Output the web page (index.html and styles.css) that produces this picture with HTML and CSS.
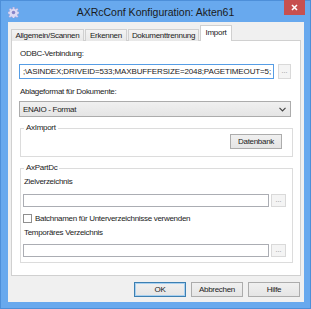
FILE: index.html
```html
<!DOCTYPE html>
<html>
<head>
  <title>AXRcConf Konfiguration</title>
  <link rel="stylesheet" href="styles.css">
</head>
<body>
  <div class="window">
    <div class="titlebar">
      <svg class="app-icon" width="11" height="11" viewBox="0 0 20 20">
        <path d="M8.5 0h3l.5 3 2 .9 2.5-1.8 2.1 2.1-1.8 2.5.9 2 3 .5v3l-3 .5-.9 2 1.8 2.5-2.1 2.1-2.5-1.8-2 .9-.5 3h-3l-.5-3-2-.9-2.5 1.8-2.1-2.1 1.8-2.5-.9-2-3-.5v-3l3-.5.9-2L2.1 4.2 4.2 2.1l2.5 1.8 2-.9z" fill="#dcdaf4" stroke="#a3a1d8" stroke-width="1"/>
        <circle cx="10" cy="10" r="3.2" fill="#8684c8"/>
      </svg>
      <div class="title">AXRcConf Konfiguration: Akten61</div>
      <div class="close">
        <svg width="7" height="7" viewBox="0 0 7 7"><path d="M1 1l5 5M6 1l-5 5" stroke="#fff" stroke-width="1.6"/></svg>
      </div>
    </div>

    <div class="client">
      <div class="tabs">
        <div class="tab" style="width:73px">Allgemein/Scannen</div>
        <div class="tab" style="width:42px">Erkennen</div>
        <div class="tab" style="width:71px">Dokumenttrennung</div>
        <div class="tab active" style="width:32px">Import</div>
      </div>

      <div class="panel">
        <div class="label">ODBC-Verbindung:</div>
        <div class="row row-odbc">
          <div class="input focus"><span>;\ASINDEX;DRIVEID=533;MAXBUFFERSIZE=2048;PAGETIMEOUT=5;</span></div>
          <div class="dots">...</div>
        </div>

        <div class="label label-ablage">Ablageformat für Dokumente:</div>
        <div class="select">
          <span>ENAIO - Format</span>
          <svg width="7" height="5" viewBox="0 0 7 5"><path d="M0.5 0.8l3 3 3-3" fill="none" stroke="#444" stroke-width="1.2"/></svg>
        </div>

        <fieldset class="group group-import">
          <legend>AxImport</legend>
          <div class="btn-row">
            <div class="button">Datenbank</div>
          </div>
        </fieldset>

        <fieldset class="group group-part">
          <legend>AxPartDc</legend>
          <div class="label label-ziel">Zielverzeichnis</div>
          <div class="row row-small">
            <div class="input small"></div>
            <div class="dots small">...</div>
          </div>
          <div class="check-row">
            <div class="checkbox"></div>
            <span>Batchnamen für Unterverzeichnisse verwenden</span>
          </div>
          <div class="label label-temp">Temporäres Verzeichnis</div>
          <div class="row row-small row-temp">
            <div class="input small"></div>
            <div class="dots small">...</div>
          </div>
        </fieldset>
      </div>

      <div class="footer">
        <div class="button default">OK</div>
        <div class="button">Abbrechen</div>
        <div class="button">Hilfe</div>
      </div>
    </div>
  </div>
</body>
</html>
```

FILE: styles.css
```css
* {
  box-sizing: border-box;
}
body {
  margin: 0;
  font-family: "Liberation Sans", Arial, sans-serif;
  font-size: 8px;
  letter-spacing: -0.3px;
  color: #1b1b1b;
}
.window {
  width: 311px;
  height: 309px;
  background: #68a9ee;
  border: 1px solid #4d8fd9;
  display: flex;
  flex-direction: column;
}
.titlebar {
  height: 21px;
  display: flex;
  align-items: flex-start;
}
.app-icon {
  margin: 6px 0 0 7px;
}
.title {
  flex: 1;
  text-align: center;
  font-size: 10.5px;
  letter-spacing: 0;
  line-height: 11px;
  margin-top: 6px;
  padding-left: 8px;
  color: #1a1a1a;
}
.close {
  width: 21px;
  height: 15px;
  margin: -1px 5px 0 0;
  background: #c75050;
  display: flex;
  align-items: center;
  justify-content: center;
}
.client {
  flex: 1;
  margin: 0 6px 6px 7px;
  background: #f0f0f0;
  padding: 0 3px 4px 3px;
  display: flex;
  flex-direction: column;
}

/* Tabs */
.tabs {
  display: flex;
  align-items: flex-end;
  height: 19px;
  margin-bottom: -1px;
  position: relative;
  z-index: 1;
}
.tab {
  height: 12px;
  line-height: 11px;
  text-align: center;
  border: 1px solid #d0d0d0;
  border-bottom: none;
  background: linear-gradient(#f3f3f3, #e8e8e8);
  margin-right: 1px;
  white-space: nowrap;
}
.tab.active {
  height: 16px;
  background: #fff;
  line-height: 13px;
  margin-right: 0;
}

.panel {
  width: 290px;
  height: 236px;
  background: #fff;
  border: 1px solid #d0d0d0;
  padding: 8px 9px 0 7px;
  display: flex;
  flex-direction: column;
}
.label {
  line-height: 10px;
  height: 10px;
  padding-left: 1px;
  white-space: nowrap;
}
.row {
  display: flex;
  align-items: center;
}
.row-odbc {
  margin-top: 5px;
  gap: 4px;
}
.input {
  height: 15px;
  flex: 1;
  background: #fff;
  border: 1px solid #abadb3;
  overflow: hidden;
  display: flex;
  justify-content: flex-end;
  align-items: center;
  white-space: nowrap;
  padding: 0 2px;
}
.input.focus {
  border-color: #569de5;
  width: 255px;
  flex: none;
  letter-spacing: -0.13px;
}
.dots {
  width: 13px;
  height: 15px;
  border: 1px solid #d9d9d9;
  background: #f4f4f4;
  color: #8a8a8a;
  text-align: center;
  line-height: 11px;
  font-size: 7px;
  letter-spacing: 0;
}
.label-ablage {
  margin-top: 8px;
}
.select {
  margin-top: 4px;
  height: 16px;
  width: 272px;
  background: linear-gradient(#f0f0f0, #e5e5e5);
  border: 1px solid #acacac;
  display: flex;
  align-items: center;
  justify-content: space-between;
  padding: 0 4px 0 3px;
}

/* Group boxes */
.group {
  margin: 6px 0 0 1px;
  width: 273px;
  border: 1px solid #dcdcdc;
  padding: 0 2px;
  min-width: 0;
}
.group legend {
  padding: 0 2px;
  margin-left: 1px;
  line-height: 10px;
  height: 10px;
}
.btn-row {
  display: flex;
  justify-content: flex-end;
  margin-top: 1px;
  padding-right: 8px;
  padding-bottom: 7px;
}
.button {
  width: 52px;
  height: 15px;
  border: 1px solid #acacac;
  background: linear-gradient(#f0f0f0, #e5e5e5);
  text-align: center;
  line-height: 13px;
}
.button.default {
  border-color: #3c7fb1;
  box-shadow: inset 0 0 0 1px #a8d0f0;
}
.group-part {
  padding-bottom: 5px;
}
.label-ziel {
  margin-top: 4px;
}
.row-small {
  margin-top: 7px;
  gap: 2px;
}
.input.small {
  height: 13px;
  flex: none;
  width: 246px;
}
.dots.small {
  width: 15px;
  height: 13px;
  line-height: 9px;
}
.check-row {
  margin-top: 6px;
  display: flex;
  align-items: center;
  gap: 3px;
  height: 10px;
  white-space: nowrap;
}
.checkbox {
  width: 9px;
  height: 9px;
  border: 1px solid #8f8f8f;
  background: #fff;
}
.label-temp {
  margin-top: 5px;
}
.row-temp {
  margin-top: 6px;
}

.footer {
  margin-top: 6px;
  display: flex;
  justify-content: flex-end;
  gap: 5px;
  padding-right: 1px;
}
```
